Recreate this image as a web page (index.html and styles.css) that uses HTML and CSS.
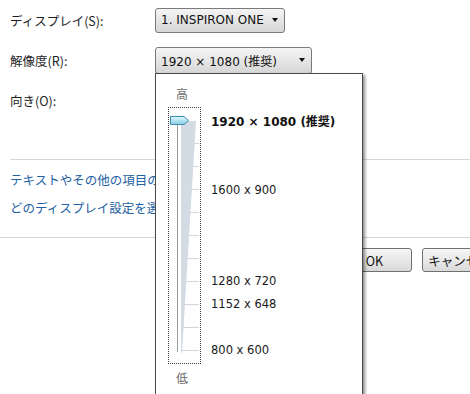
FILE: index.html
```html
<!DOCTYPE html>
<html lang="ja">
<head>
    <meta charset="UTF-8">
    <title>画面の解像度</title>
    <link rel="stylesheet" href="styles.css">
</head>
<body>

    <div class="dialog">
        <div class="settings">
            <div class="row">
                <span class="label">ディスプレイ(S):</span>
                <div class="dropdown dd-display">
                    <span>1. INSPIRON ONE</span>
                    <span class="arrow"></span>
                </div>
            </div>
            <div class="row">
                <span class="label">解像度(R):</span>
                <div class="dropdown dd-res">
                    <span>1920 × 1080 (推奨)</span>
                    <span class="arrow"></span>
                </div>
            </div>
            <div class="row">
                <span class="label">向き(O):</span>
            </div>
        </div>

        <div class="sep"></div>

        <div class="links">
            <a href="#">テキストやその他の項目の大きさの変更</a>
            <a href="#">どのディスプレイ設定を選べばよいですか?</a>
        </div>

        <div class="footer">
            <button class="btn">OK</button>
            <button class="btn">キャンセル</button>
        </div>

        <!-- resolution slider popup, drops down over the dialog -->
        <div class="popup">
            <div class="scale-col">
                <div class="scale-end">高</div>
                <div class="scale-box">
                    <svg width="31" height="255" viewBox="0 0 31 255">
                        <defs>
                            <linearGradient id="thumbFill" x1="0" y1="0" x2="0" y2="1">
                                <stop offset="0" stop-color="#e2f6fc"/>
                                <stop offset="1" stop-color="#86cfea"/>
                            </linearGradient>
                        </defs>
                        <g stroke="#cfd6de" stroke-width="1">
                            <line x1="12" y1="35.5" x2="30" y2="35.5"/>
                            <line x1="12" y1="58.5" x2="30" y2="58.5"/>
                            <line x1="12" y1="81.5" x2="30" y2="81.5"/>
                            <line x1="12" y1="104.5" x2="30" y2="104.5"/>
                            <line x1="12" y1="127.5" x2="30" y2="127.5"/>
                            <line x1="12" y1="150.5" x2="30" y2="150.5"/>
                            <line x1="12" y1="173.5" x2="30" y2="173.5"/>
                            <line x1="12" y1="196.5" x2="30" y2="196.5"/>
                            <line x1="12" y1="219.5" x2="30" y2="219.5"/>
                            <line x1="12" y1="242.5" x2="30" y2="242.5"/>
                        </g>
                        <polygon points="12,13 27,13 13,245 12,245" fill="#d3dbe4"/>
                        <line x1="8.5" y1="17" x2="8.5" y2="244" stroke="#9c9c9c" stroke-width="1"/>
                        <polygon points="1.5,8.5 15,8.5 19.5,12.5 15,16.5 1.5,16.5" fill="url(#thumbFill)" stroke="#3f8cae" stroke-width="1" stroke-linejoin="round"/>
                    </svg>
                </div>
                <div class="scale-end low">低</div>
            </div>
            <div class="res-list">
                <div class="res current" style="grid-row: 1">1920 × 1080 (推奨)</div>
                <div class="res" style="grid-row: 4">1600 x 900</div>
                <div class="res" style="grid-row: 8">1280 x 720</div>
                <div class="res" style="grid-row: 9">1152 x 648</div>
                <div class="res" style="grid-row: 11">800 x 600</div>
            </div>
        </div>
    </div>

</body>
</html>
```

FILE: styles.css
```css
body {
    margin: 0;
    background-color: #fff;
    overflow: hidden;
    font-family: "Noto Sans CJK JP", "DejaVu Sans", sans-serif;
    color: #1e1e1e;
}

.dialog {
    position: relative;
    width: 508px;
    height: 394px;
}

.settings {
    padding: 7px 0 0 10px;
    display: flex;
    flex-direction: column;
    gap: 14px;
}

.row {
    display: flex;
    align-items: center;
    height: 26px;
}

.label {
    width: 145px;
    font-size: 12.5px;
}

.dropdown {
    box-sizing: border-box;
    height: 25px;
    display: flex;
    align-items: center;
    justify-content: space-between;
    padding: 0 6px 0 5px;
    border: 1px solid #7a7a7a;
    border-radius: 3px;
    background: linear-gradient(#f4f4f4, #e6e6e6 50%, #d6d6d6);
    font-family: "DejaVu Sans", "Noto Sans CJK JP", sans-serif;
    font-size: 12px;
    color: #111;
}

.dd-display {
    width: 130px;
}

.dd-res {
    width: 157px;
    height: 27px;
}

.arrow {
    width: 0;
    height: 0;
    border-left: 3.5px solid transparent;
    border-right: 3.5px solid transparent;
    border-top: 4px solid #111;
}

.sep {
    height: 1px;
    margin: 46px 10px 0 10px;
    background-color: #d6d6d6;
}

/* the popup hides everything right of x=155 */
.links {
    width: 145px;
    overflow: hidden;
    padding: 6px 0 0 10px;
    display: flex;
    flex-direction: column;
}

.links a {
    line-height: 28px;
    font-size: 12.5px;
    color: #2461a3;
    text-decoration: none;
    white-space: nowrap;
}

.footer {
    margin-top: 15px;
    border-top: 1px solid #d4d4d4;
    padding: 10px 11px 0 0;
    display: flex;
    justify-content: flex-end;
    gap: 10px;
}

.btn {
    width: 75px;
    height: 24px;
    border: 1px solid #707070;
    border-radius: 3px;
    background: linear-gradient(#f6f6f6, #e9e9e9 50%, #d9d9d9);
    font-family: "Noto Sans CJK JP", sans-serif;
    font-size: 12.5px;
    color: #111;
    padding: 0;
}

.popup {
    position: absolute;
    left: 155px;
    top: 73px;
    box-sizing: border-box;
    width: 208px;
    height: 340px;
    border: 1px solid #4a4a4a;
    background-color: #fff;
    box-shadow: 2px 2px 3px rgba(0,0,0,0.45);
    display: flex;
    padding: 12px 0 0 12px;
}

.scale-col {
    width: 33px;
    display: flex;
    flex-direction: column;
}

.scale-end {
    font-size: 12px;
    line-height: 16px;
    color: #6d6d6d;
    padding-left: 8px;
    margin-bottom: 5px;
}

.scale-end.low {
    margin: 6px 0 0 0;
}

.scale-box {
    box-sizing: border-box;
    width: 33px;
    height: 257px;
    border: 1px dotted #3a3a3a;
}

.scale-box svg {
    display: block;
}

.res-list {
    margin: 23.5px 0 0 10px;
    display: grid;
    grid-template-rows: repeat(11, 22.9px);
    align-items: center;
}

.res {
    font-family: "DejaVu Sans", "Noto Sans CJK JP", sans-serif;
    font-size: 11.5px;
    color: #1a1a1a;
    white-space: nowrap;
}

.res.current {
    font-weight: bold;
    font-size: 12px;
    color: #111;
}
```
